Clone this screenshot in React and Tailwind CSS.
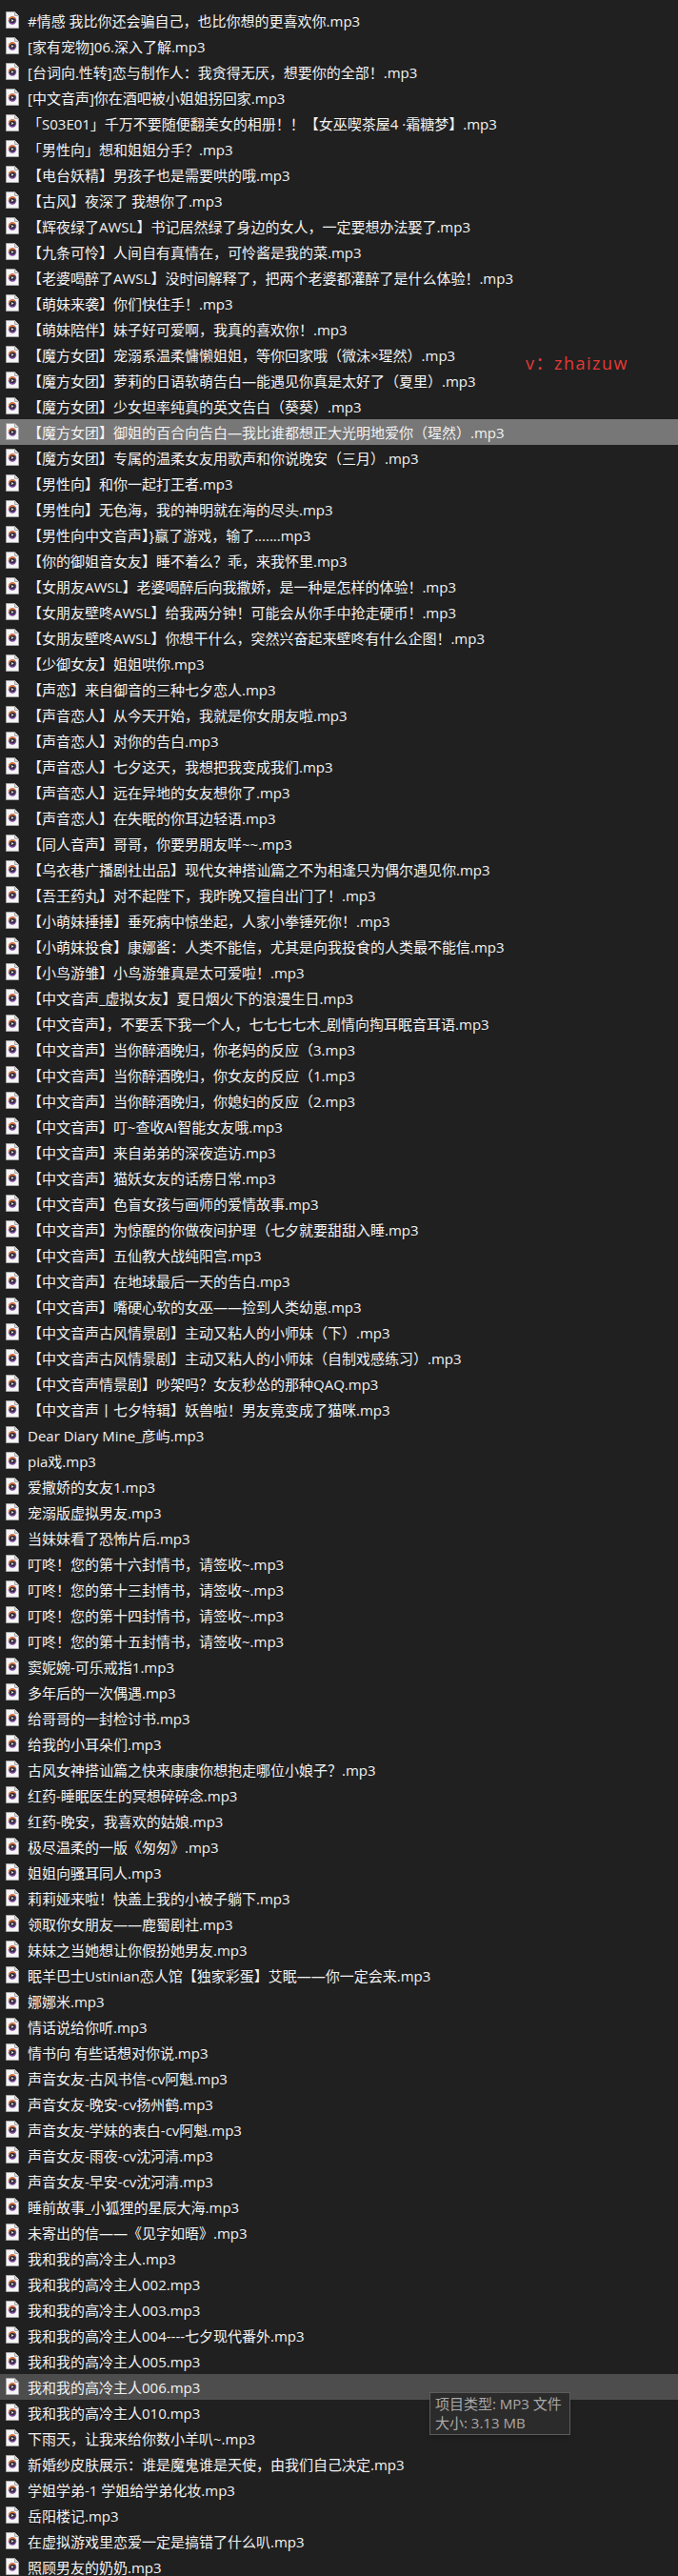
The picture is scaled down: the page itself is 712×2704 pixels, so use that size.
const files = [
  "#情感 我比你还会骗自己，也比你想的更喜欢你.mp3",
  "[家有宠物]06.深入了解.mp3",
  "[台词向.性转]恋与制作人：我贪得无厌，想要你的全部！.mp3",
  "[中文音声]你在酒吧被小姐姐拐回家.mp3",
  "「S03E01」千万不要随便翻美女的相册！！【女巫喫茶屋4 ·霜糖梦】.mp3",
  "「男性向」想和姐姐分手？.mp3",
  "【电台妖精】男孩子也是需要哄的哦.mp3",
  "【古风】夜深了 我想你了.mp3",
  "【辉夜绿了AWSL】书记居然绿了身边的女人，一定要想办法娶了.mp3",
  "【九条可怜】人间自有真情在，可怜酱是我的菜.mp3",
  "【老婆喝醉了AWSL】没时间解释了，把两个老婆都灌醉了是什么体验！.mp3",
  "【萌妹来袭】你们快住手！.mp3",
  "【萌妹陪伴】妹子好可爱啊，我真的喜欢你！.mp3",
  "【魔方女团】宠溺系温柔慵懒姐姐，等你回家哦（微沫×瑆然）.mp3",
  "【魔方女团】萝莉的日语软萌告白—能遇见你真是太好了（夏里）.mp3",
  "【魔方女团】少女坦率纯真的英文告白（葵葵）.mp3",
  "【魔方女团】御姐的百合向告白—我比谁都想正大光明地爱你（瑆然）.mp3",
  "【魔方女团】专属的温柔女友用歌声和你说晚安（三月）.mp3",
  "【男性向】和你一起打王者.mp3",
  "【男性向】无色海，我的神明就在海的尽头.mp3",
  "【男性向中文音声】}赢了游戏，输了.......mp3",
  "【你的御姐音女友】睡不着么？乖，来我怀里.mp3",
  "【女朋友AWSL】老婆喝醉后向我撒娇，是一种是怎样的体验！.mp3",
  "【女朋友壁咚AWSL】给我两分钟！可能会从你手中抢走硬币！.mp3",
  "【女朋友壁咚AWSL】你想干什么，突然兴奋起来壁咚有什么企图！.mp3",
  "【少御女友】姐姐哄你.mp3",
  "【声恋】来自御音的三种七夕恋人.mp3",
  "【声音恋人】从今天开始，我就是你女朋友啦.mp3",
  "【声音恋人】对你的告白.mp3",
  "【声音恋人】七夕这天，我想把我变成我们.mp3",
  "【声音恋人】远在异地的女友想你了.mp3",
  "【声音恋人】在失眠的你耳边轻语.mp3",
  "【同人音声】哥哥，你要男朋友咩~~.mp3",
  "【乌衣巷广播剧社出品】现代女神搭讪篇之不为相逢只为偶尔遇见你.mp3",
  "【吾王药丸】对不起陛下，我昨晚又擅自出门了！.mp3",
  "【小萌妹捶捶】垂死病中惊坐起，人家小拳锤死你！.mp3",
  "【小萌妹投食】康娜酱：人类不能信，尤其是向我投食的人类最不能信.mp3",
  "【小鸟游雏】小鸟游雏真是太可爱啦！.mp3",
  "【中文音声_虚拟女友】夏日烟火下的浪漫生日.mp3",
  "【中文音声】，不要丢下我一个人，七七七七木_剧情向掏耳眠音耳语.mp3",
  "【中文音声】当你醉酒晚归，你老妈的反应（3.mp3",
  "【中文音声】当你醉酒晚归，你女友的反应（1.mp3",
  "【中文音声】当你醉酒晚归，你媳妇的反应（2.mp3",
  "【中文音声】叮~查收AI智能女友哦.mp3",
  "【中文音声】来自弟弟的深夜造访.mp3",
  "【中文音声】猫妖女友的话痨日常.mp3",
  "【中文音声】色盲女孩与画师的爱情故事.mp3",
  "【中文音声】为惊醒的你做夜间护理（七夕就要甜甜入睡.mp3",
  "【中文音声】五仙教大战纯阳宫.mp3",
  "【中文音声】在地球最后一天的告白.mp3",
  "【中文音声】嘴硬心软的女巫——捡到人类幼崽.mp3",
  "【中文音声古风情景剧】主动又粘人的小师妹（下）.mp3",
  "【中文音声古风情景剧】主动又粘人的小师妹（自制戏感练习）.mp3",
  "【中文音声情景剧】吵架吗？女友秒怂的那种QAQ.mp3",
  "【中文音声丨七夕特辑】妖兽啦！男友竟变成了猫咪.mp3",
  "Dear Diary Mine_彦屿.mp3",
  "pia戏.mp3",
  "爱撒娇的女友1.mp3",
  "宠溺版虚拟男友.mp3",
  "当妹妹看了恐怖片后.mp3",
  "叮咚！您的第十六封情书，请签收~.mp3",
  "叮咚！您的第十三封情书，请签收~.mp3",
  "叮咚！您的第十四封情书，请签收~.mp3",
  "叮咚！您的第十五封情书，请签收~.mp3",
  "窦妮婉-可乐戒指1.mp3",
  "多年后的一次偶遇.mp3",
  "给哥哥的一封检讨书.mp3",
  "给我的小耳朵们.mp3",
  "古风女神搭讪篇之快来康康你想抱走哪位小娘子？.mp3",
  "红药-睡眠医生的冥想碎碎念.mp3",
  "红药-晚安，我喜欢的姑娘.mp3",
  "极尽温柔的一版《匆匆》.mp3",
  "姐姐向骚耳同人.mp3",
  "莉莉娅来啦！快盖上我的小被子躺下.mp3",
  "领取你女朋友——鹿蜀剧社.mp3",
  "妹妹之当她想让你假扮她男友.mp3",
  "眠羊巴士Ustinian恋人馆【独家彩蛋】艾眠——你一定会来.mp3",
  "娜娜米.mp3",
  "情话说给你听.mp3",
  "情书向 有些话想对你说.mp3",
  "声音女友-古风书信-cv阿魁.mp3",
  "声音女友-晚安-cv扬州鹤.mp3",
  "声音女友-学妹的表白-cv阿魁.mp3",
  "声音女友-雨夜-cv沈河清.mp3",
  "声音女友-早安-cv沈河清.mp3",
  "睡前故事_小狐狸的星辰大海.mp3",
  "未寄出的信——《见字如晤》.mp3",
  "我和我的高冷主人.mp3",
  "我和我的高冷主人002.mp3",
  "我和我的高冷主人003.mp3",
  "我和我的高冷主人004----七夕现代番外.mp3",
  "我和我的高冷主人005.mp3",
  "我和我的高冷主人006.mp3",
  "我和我的高冷主人010.mp3",
  "下雨天，让我来给你数小羊叭~.mp3",
  "新婚纱皮肤展示：谁是魔鬼谁是天使，由我们自己决定.mp3",
  "学姐学弟-1 学姐给学弟化妆.mp3",
  "岳阳楼记.mp3",
  "在虚拟游戏里恋爱一定是搞错了什么叭.mp3",
  "照顾男友的奶奶.mp3",
];

// mp3 file icon, white sheet with a media disc on it
const Mp3Icon = () => (
  <svg width="14" height="18" viewBox="0 0 14 18" className="shrink-0 self-start mt-[4px]">
    <path d="M0.5 0.5H9.5L13.5 4.5V17.5H0.5Z" fill="#f6f4f6" stroke="#a8a8a8" />
    <path d="M9.5 0.5V4.5H13.5" fill="#dcdcdc" stroke="#a8a8a8" />
    <circle cx="7" cy="9.5" r="4.2" fill="#7b4a9e" />
    <path d="M2.8 9.5A4.2 4.2 0 0 1 10.2 6.8L7 9.5Z" fill="#e8782c" />
    <circle cx="7" cy="9.5" r="2.8" fill="#2c2c34" />
    <path d="M6.1 8L8.5 9.5L6.1 11Z" fill="#e6e6e6" />
  </svg>
);

const rowBg = (i) => {
  if (i === 16) return "bg-[#777777]";
  if (i === 92) return "bg-[#4d4d4d]";
  return "";
};

export default function App() {
  return (
    <div className="relative w-[712px] h-[2704px] overflow-hidden bg-[#202020] pt-2 [font-family:'Open_Sans','Noto_Sans_CJK_SC',sans-serif] text-[15px] text-[#f2f2f2]">
      {files.map((name, i) => (
        <div key={i} className={`flex items-center h-[27px] pl-[6px] gap-[9px] ${rowBg(i)}`}>
          <Mp3Icon />
          <span className="block whitespace-nowrap leading-[27px] pt-[2px]">{name}</span>
        </div>
      ))}

      {/* watermark */}
      <div className="absolute left-[552px] top-[370px] text-[18px] tracking-[1.5px] leading-[22px] text-[#e53935]">v：zhaizuw</div>

      {/* tooltip */}
      <div className="absolute left-[451px] top-[2511px] w-[148px] h-[45px] border border-[#5c5c5c] bg-[#2b2b2b] pt-px px-[5px] text-[15px] leading-[20px] text-[#a9a9a9] shadow-md">
        <div className="whitespace-nowrap">项目类型: MP3 文件</div>
        <div className="whitespace-nowrap">大小: 3.13 MB</div>
      </div>
    </div>
  );
}
